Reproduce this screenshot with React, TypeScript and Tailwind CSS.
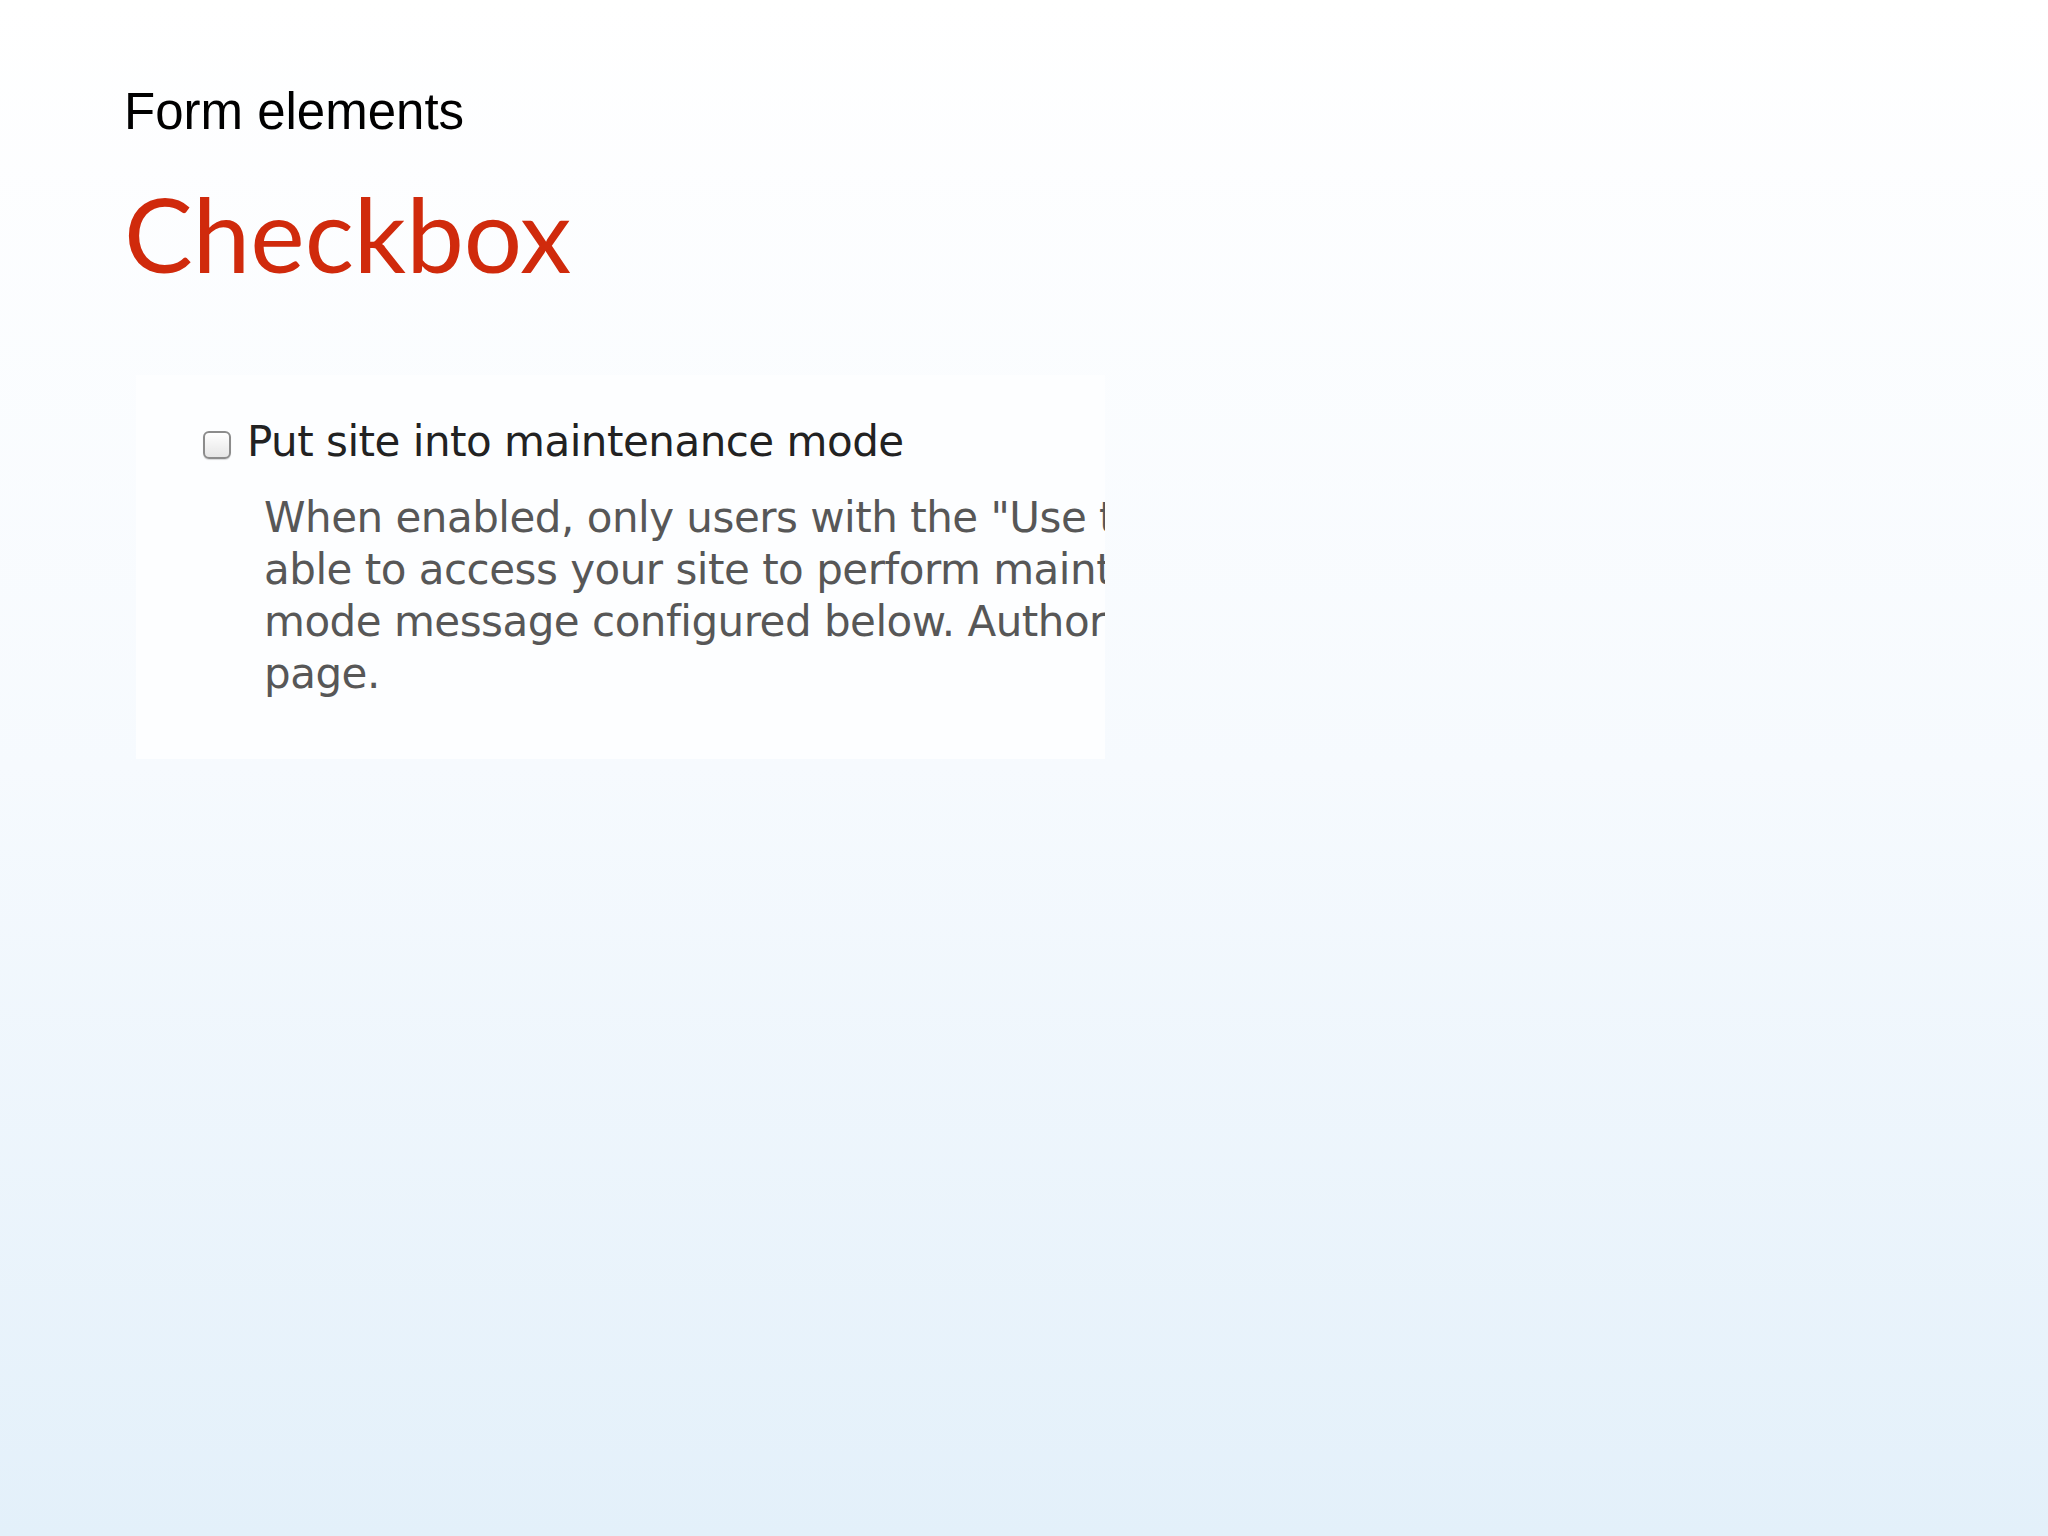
export default function App() {
  return (
    <div className="min-h-[1536px] w-[2048px] bg-linear-to-b from-white via-[#f6fafe] to-[#e3f0fa] pl-[124px] pt-[86px]">
      <div className="font-['Liberation_Sans',Arial,sans-serif] text-[51px] leading-none text-black">Form elements</div>
      <h1 className="mt-[45px] font-['Lato','Open_Sans',sans-serif] text-[103px] leading-none text-[#d02a0c]">Checkbox</h1>

      <div className="ml-[12px] mt-[90px] w-[969px] overflow-hidden bg-[#fdfeff] pb-[59px] pl-[67px] pt-[41px] font-['DejaVu_Sans','Verdana',sans-serif] text-[42px] leading-[52px] tracking-[-0.5px]">
        <label className="flex items-start gap-[16px] whitespace-nowrap text-[#222222]">
          <input
            type="checkbox"
            className="mt-[15px] h-[28px] w-[28px] shrink-0 appearance-none rounded-[6px] border-2 border-[#8c8c8c] bg-linear-to-b from-white to-[#e6e6e6] shadow-[0_1px_1px_rgba(0,0,0,0.15)]"
          />
          Put site into maintenance mode
        </label>
        <div className="ml-[61px] mt-[24px] whitespace-nowrap text-[#575757]">
          <div>When enabled, only users with the "Use the site in maintenance mode" permission are</div>
          <div>able to access your site to perform maintenance; all other visitors see the maintenance</div>
          <div>mode message configured below. Authorized users can log in directly via the user login</div>
          <div>page.</div>
        </div>
      </div>
    </div>
  );
}
